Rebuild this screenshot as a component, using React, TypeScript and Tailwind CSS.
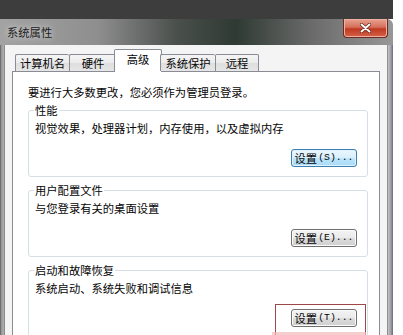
import React from 'react';

const tabs = [
  { label: '计算机名', w: 'w-[54px]' },
  { label: '硬件', w: 'w-[47px]' },
  { label: '高级', w: 'w-[46px]', active: true },
  { label: '系统保护', w: 'w-[55px]' },
  { label: '远程', w: 'w-[44px]' },
];

interface GroupProps {
  title: string;
  desc: string;
  hotkey: string;
  focused?: boolean;
}

function SettingsButton({ hotkey, focused }: { hotkey: string; focused?: boolean }) {
  return (
    <button
      className={`w-[66px] h-[18px] rounded-[3px] border flex items-center justify-center leading-[16px] ${
        focused
          ? 'border-[#3c7fb1] bg-[linear-gradient(#eaf6fd,#d9f0fc_50%,#bee6fd_50%,#a7d9f5)] shadow-[inset_0_0_0_1px_#dff2fd]'
          : 'border-[#707070] bg-[linear-gradient(#f2f2f2,#ebebeb_50%,#dddddd_50%,#cfcfcf)] shadow-[inset_0_0_0_1px_#fcfcfc]'
      }`}
    >
      设置
      <span className="font-['Liberation_Mono',monospace] text-[9.8px] ml-[1px]">({hotkey})...</span>
    </button>
  );
}

function Group({ title, desc, hotkey, focused }: GroupProps) {
  return (
    <fieldset className="border border-[#d5dfe5] rounded-[3px] px-[6px] pb-[9px]">
      <legend className="leading-[12px] px-[1px] -ml-[1px]">{title}</legend>
      <div className="leading-[16px] pt-[4px]">{desc}</div>
      <div className="flex justify-end pr-[4px] mt-[13px]">
        <SettingsButton hotkey={hotkey} focused={focused} />
      </div>
    </fieldset>
  );
}

export default function App() {
  return (
    <div className="relative w-[403px] h-[335px] overflow-hidden bg-white font-['Noto_Sans_CJK_SC',sans-serif] text-[11.3px] text-[#050505]">
      <div className="w-[393px]">
        <div className="h-[19px] bg-[#3d3d3d]" />

        {/* 标题栏 */}
        <div className="h-[26px] flex justify-between rounded-tr-[6px] bg-[linear-gradient(90deg,#a3a3a3_0%,#8e8e8e_25%,#4a4f4c_45%,#2f3a34_60%,#6c6c6c_80%,#979797_100%)]">
          <div className="pl-[7px] pt-[7px] leading-[12px] text-[#1c1c1c] [text-shadow:0_0_6px_#e8e8e8]">系统属性</div>
          <div className="mr-[5px] w-[45px] h-[19px] rounded-b-[4px] border border-t-0 border-[#6b2a22] bg-[linear-gradient(#e8a393,#d5705c_45%,#c0391f_55%,#d3624a)] shadow-[inset_0_0_0_1px_#f0b0a0] flex items-center justify-center">
            <svg width="11" height="10" viewBox="0 0 11 10">
              <path d="M1.5 1.5 L9.5 8.5 M9.5 1.5 L1.5 8.5" stroke="#5a2018" strokeWidth="3.4" strokeLinecap="round" />
              <path d="M1.5 1.5 L9.5 8.5 M9.5 1.5 L1.5 8.5" stroke="#ffffff" strokeWidth="2" strokeLinecap="round" />
            </svg>
          </div>
        </div>

        <div className="flex">
          <div className="w-[5px] bg-[linear-gradient(90deg,#5e5e5e,#9a9a9a_40%,#b2b2b2)] border-r border-[#8a8a8a]" />

          <div className="flex-1 bg-[#f4f4f4] pt-[6px] px-[7px]">
            {/* 选项卡 */}
            <div className="relative z-10 flex items-end h-[21px] -mb-[1px] pl-[3px]">
              {tabs.map(t =>
                t.active ? (
                  <div
                    key={t.label}
                    className={`${t.w} box-content -mx-[2px] h-[21px] bg-white border border-b-0 border-[#898c95] rounded-t-[2px] flex justify-center pt-[1px] leading-[16px]`}
                  >
                    {t.label}
                  </div>
                ) : (
                  <div
                    key={t.label}
                    className={`${t.w} h-[17px] mb-[1px] bg-[linear-gradient(#f5f5f5,#ebebeb_50%,#dedede_50%,#e6e6e6)] border border-b-0 border-r-0 last:border-r border-[#898c95] rounded-t-[2px] flex items-center justify-center leading-[16px]`}
                  >
                    {t.label}
                  </div>
                ),
              )}
            </div>

            <div className="bg-white border border-[#898c95] pt-[12px] pl-[15px] pr-[11px] pb-[40px]">
              <div className="leading-[16px] mb-[4px]">要进行大多数更改，您必须作为管理员登录。</div>
              <div className="flex flex-col gap-[7px]">
                <Group title="性能" desc="视觉效果，处理器计划，内存使用，以及虚拟内存" hotkey="S" focused />
                <Group title="用户配置文件" desc="与您登录有关的桌面设置" hotkey="E" />
                <Group title="启动和故障恢复" desc="系统启动、系统失败和调试信息" hotkey="T" />
              </div>
            </div>
          </div>

          <div className="w-[6px] border-l border-[#8f8f8f] bg-[linear-gradient(90deg,#c4c4c4,#9d9aa8_60%,#6c6a78)]" />
        </div>
      </div>

      {/* 标注红框 */}
      <div className="absolute left-[275px] top-[304px] w-[91px] h-[40px] border border-[#9c4848]" />
      <div className="absolute left-[272px] top-[332px] w-[94px] h-[3px] bg-[#f3b9b9] opacity-70" />
    </div>
  );
}
